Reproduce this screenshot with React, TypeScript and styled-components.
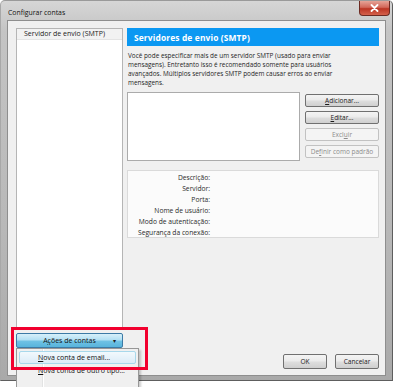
import { createGlobalStyle } from "styled-components";
import styled from "styled-components";

const GlobalStyle = createGlobalStyle`
  html, body {
    margin: 0;
    padding: 0;
    background: #ffffff;
  }
  body {
    font-family: "Open Sans", "Liberation Sans", sans-serif;
    font-size: 6.6px;
    color: #1e1e1e;
  }
`;

const details = [
  "Descrição:",
  "Servidor:",
  "Porta:",
  "Nome de usuário:",
  "Modo de autenticação:",
  "Segurança da conexão:",
];

export default function App() {
  return (
    <Page>
      <GlobalStyle />
      <Window>
        <TitleBar>
          <Title>Configurar contas</Title>
          <CloseButton>
            <svg width="9" height="8" viewBox="0 0 9 8">
              <path
                d="M1.5 1 L7.5 7 M7.5 1 L1.5 7"
                stroke="#ffffff"
                strokeWidth="1.8"
                strokeLinecap="round"
              />
            </svg>
          </CloseButton>
        </TitleBar>
        <Client>
          <LeftColumn>
            <Tree>
              <TreeItem>Servidor de envio (SMTP)</TreeItem>
            </Tree>
            <ActionsButton>
              <span>
                A<U>ç</U>ões de contas
              </span>
              <Caret>▾</Caret>
            </ActionsButton>
          </LeftColumn>
          <RightColumn>
            <Header>Servidores de envio (SMTP)</Header>
            <Description>
              Você pode especificar mais de um servidor SMTP (usado para enviar
              mensagens). Entretanto isso é recomendado somente para usuários
              avançados. Múltiplos servidores SMTP podem causar erros ao enviar
              mensagens.
            </Description>
            <ListRow>
              <ServerList />
              <ButtonStack>
                <Button>
                  <U>A</U>dicionar...
                </Button>
                <Button>
                  <U>E</U>ditar...
                </Button>
                <Button disabled>
                  Excl<U>u</U>ir
                </Button>
                <Button disabled>
                  De<U>f</U>inir como padrão
                </Button>
              </ButtonStack>
            </ListRow>
            <DetailsBox>
              {details.map((label) => (
                <DetailLabel key={label}>{label}</DetailLabel>
              ))}
            </DetailsBox>
            <Footer>
              <DialogButton>OK</DialogButton>
              <DialogButton>Cancelar</DialogButton>
            </Footer>
          </RightColumn>
          <Menu>
            <MenuItem active>
              <U>N</U>ova conta de email...
            </MenuItem>
            <MenuItem>
              <U>N</U>ova conta de outro tipo...
            </MenuItem>
          </Menu>
          <Highlight />
        </Client>
      </Window>
    </Page>
  );
}

const Page = styled.div`
  width: 400px;
  height: 387px;
  overflow: hidden;
`;

const Window = styled.div`
  width: 393px;
  height: 381px;
  display: flex;
  flex-direction: column;
  padding: 0 6px 4px 6px;
  box-sizing: border-box;
  border: 1px solid #5e5e5e;
  border-top-color: #9a9a9a;
  border-left-color: #a8a8a8;
  border-radius: 5px 5px 0 0;
  background: linear-gradient(to bottom, #d6d6d6 0%, #c4c4c4 8%, #b8b8b8 60%, #a9a9a9 100%);
`;

const TitleBar = styled.div`
  height: 19px;
  display: flex;
  align-items: center;
  justify-content: space-between;
  flex-shrink: 0;
`;

const Title = styled.span`
  font-size: 6.9px;
  color: #111;
  padding-left: 1px;
  margin-top: 4px;
`;

const CloseButton = styled.div`
  width: 29px;
  height: 14px;
  margin-top: -4px;
  margin-right: -4px;
  display: flex;
  align-items: center;
  justify-content: center;
  border: 1px solid #6d2a22;
  border-top: none;
  border-radius: 0 0 4px 4px;
  background: linear-gradient(to bottom, #e6a497 0%, #d2685a 45%, #bb3524 55%, #d4614c 100%);
`;

const Client = styled.div`
  position: relative;
  flex: 1;
  display: flex;
  padding: 7px 6px 6px 8px;
  background: #f0f0f0;
  border: 1px solid #8e8e8e;
`;

const LeftColumn = styled.div`
  width: 108px;
  display: flex;
  flex-direction: column;
  padding-bottom: 21px;
`;

const Tree = styled.div`
  flex: 1;
  background: #ffffff;
  border: 1px solid #b5b5b5;
`;

const TreeItem = styled.div`
  height: 10px;
  line-height: 10px;
  padding-left: 7px;
  font-size: 7px;
  background: #f2f2f2;
  border-bottom: 1px solid #e4e4e4;
  color: #222;
`;

const ActionsButton = styled.div`
  margin-top: 4px;
  height: 13px;
  display: flex;
  align-items: center;
  justify-content: center;
  position: relative;
  border: 1px solid #3c7aa5;
  border-radius: 2px;
  background: linear-gradient(to bottom, #d7f0fa 0%, #b2e0f3 45%, #6fc2e4 55%, #58b4dc 100%);
  color: #111;
  font-size: 7px;
`;

const Caret = styled.span`
  position: absolute;
  right: 6px;
  font-size: 6px;
  color: #222;
`;

const RightColumn = styled.div`
  flex: 1;
  margin-left: 4px;
  display: flex;
  flex-direction: column;
`;

const Header = styled.div`
  height: 18px;
  flex-shrink: 0;
  display: flex;
  align-items: center;
  padding-left: 7px;
  background: #0b98f2;
  color: #ffffff;
  font-weight: 700;
  font-size: 8.4px;
  letter-spacing: 0.15px;
`;

const Description = styled.p`
  margin: 5px 0 0 1px;
  line-height: 9px;
  font-size: 6.4px;
  color: #1e1e1e;
  padding-right: 30px;
`;

const ListRow = styled.div`
  display: flex;
  margin-top: 5px;
  gap: 5px;
`;

const ServerList = styled.div`
  width: 173px;
  height: 69px;
  box-sizing: border-box;
  background: #ffffff;
  border: 1px solid #ababab;
`;

const ButtonStack = styled.div`
  display: flex;
  flex-direction: column;
  gap: 4px;
  margin-top: 2px;
`;

const Button = styled.div<{ disabled?: boolean }>`
  width: 74px;
  height: 13px;
  box-sizing: border-box;
  display: flex;
  align-items: center;
  justify-content: center;
  white-space: nowrap;
  font-size: 6.5px;
  border: 1px solid ${(p) => (p.disabled ? "#c2c2c2" : "#707070")};
  border-radius: 2px;
  background: ${(p) =>
    p.disabled
      ? "#f4f4f4"
      : "linear-gradient(to bottom, #f4f4f4 0%, #ebebeb 45%, #dddddd 55%, #cfcfcf 100%)"};
  color: ${(p) => (p.disabled ? "#8c8c8c" : "#1a1a1a")};
`;

const U = styled.span`
  text-decoration: underline;
`;

const DetailsBox = styled.div`
  margin-top: 9px;
  height: 68px;
  flex-shrink: 0;
  box-sizing: border-box;
  padding: 1px 0 0 0;
  background: #fbfbfb;
  border: 1px solid #dadada;
  display: flex;
  flex-direction: column;
`;

const DetailLabel = styled.div`
  width: 82px;
  text-align: right;
  line-height: 11px;
  font-size: 6.7px;
  color: #2a2a2a;
`;

const Footer = styled.div`
  margin-top: auto;
  display: flex;
  justify-content: flex-end;
  gap: 8px;
`;

const DialogButton = styled.div`
  width: 44px;
  height: 15px;
  box-sizing: border-box;
  display: flex;
  align-items: center;
  justify-content: center;
  border: 1px solid #707070;
  border-radius: 2px;
  background: linear-gradient(to bottom, #f4f4f4 0%, #ebebeb 45%, #dddddd 55%, #cfcfcf 100%);
  color: #1a1a1a;
`;

const Menu = styled.div`
  position: absolute;
  left: 8px;
  top: 327px;
  width: 123px;
  height: 50px;
  padding: 2px;
  box-sizing: border-box;
  background: #f0f0f0;
  border: 1px solid #979797;
  box-shadow: 2px 2px 2px rgba(0, 0, 0, 0.2);
  background-image: linear-gradient(to right, transparent 25px, #e2e3e3 25px, #e2e3e3 26px, #ffffff 26px, #ffffff 27px, transparent 27px);
`;

const MenuItem = styled.div<{ active?: boolean }>`
  height: 13px;
  line-height: 12px;
  padding-left: 18px;
  box-sizing: border-box;
  font-size: 7px;
  border: 1px solid ${(p) => (p.active ? "#a8d8eb" : "transparent")};
  border-radius: 2px;
  background: ${(p) =>
    p.active ? "linear-gradient(to bottom, #f2f9fd 0%, #dcecf7 100%)" : "transparent"};
  color: #111;
`;

const Highlight = styled.div`
  position: absolute;
  left: 3px;
  top: 306px;
  width: 137px;
  height: 43px;
  box-sizing: border-box;
  border: 3px solid #f2002e;
  pointer-events: none;
`;
